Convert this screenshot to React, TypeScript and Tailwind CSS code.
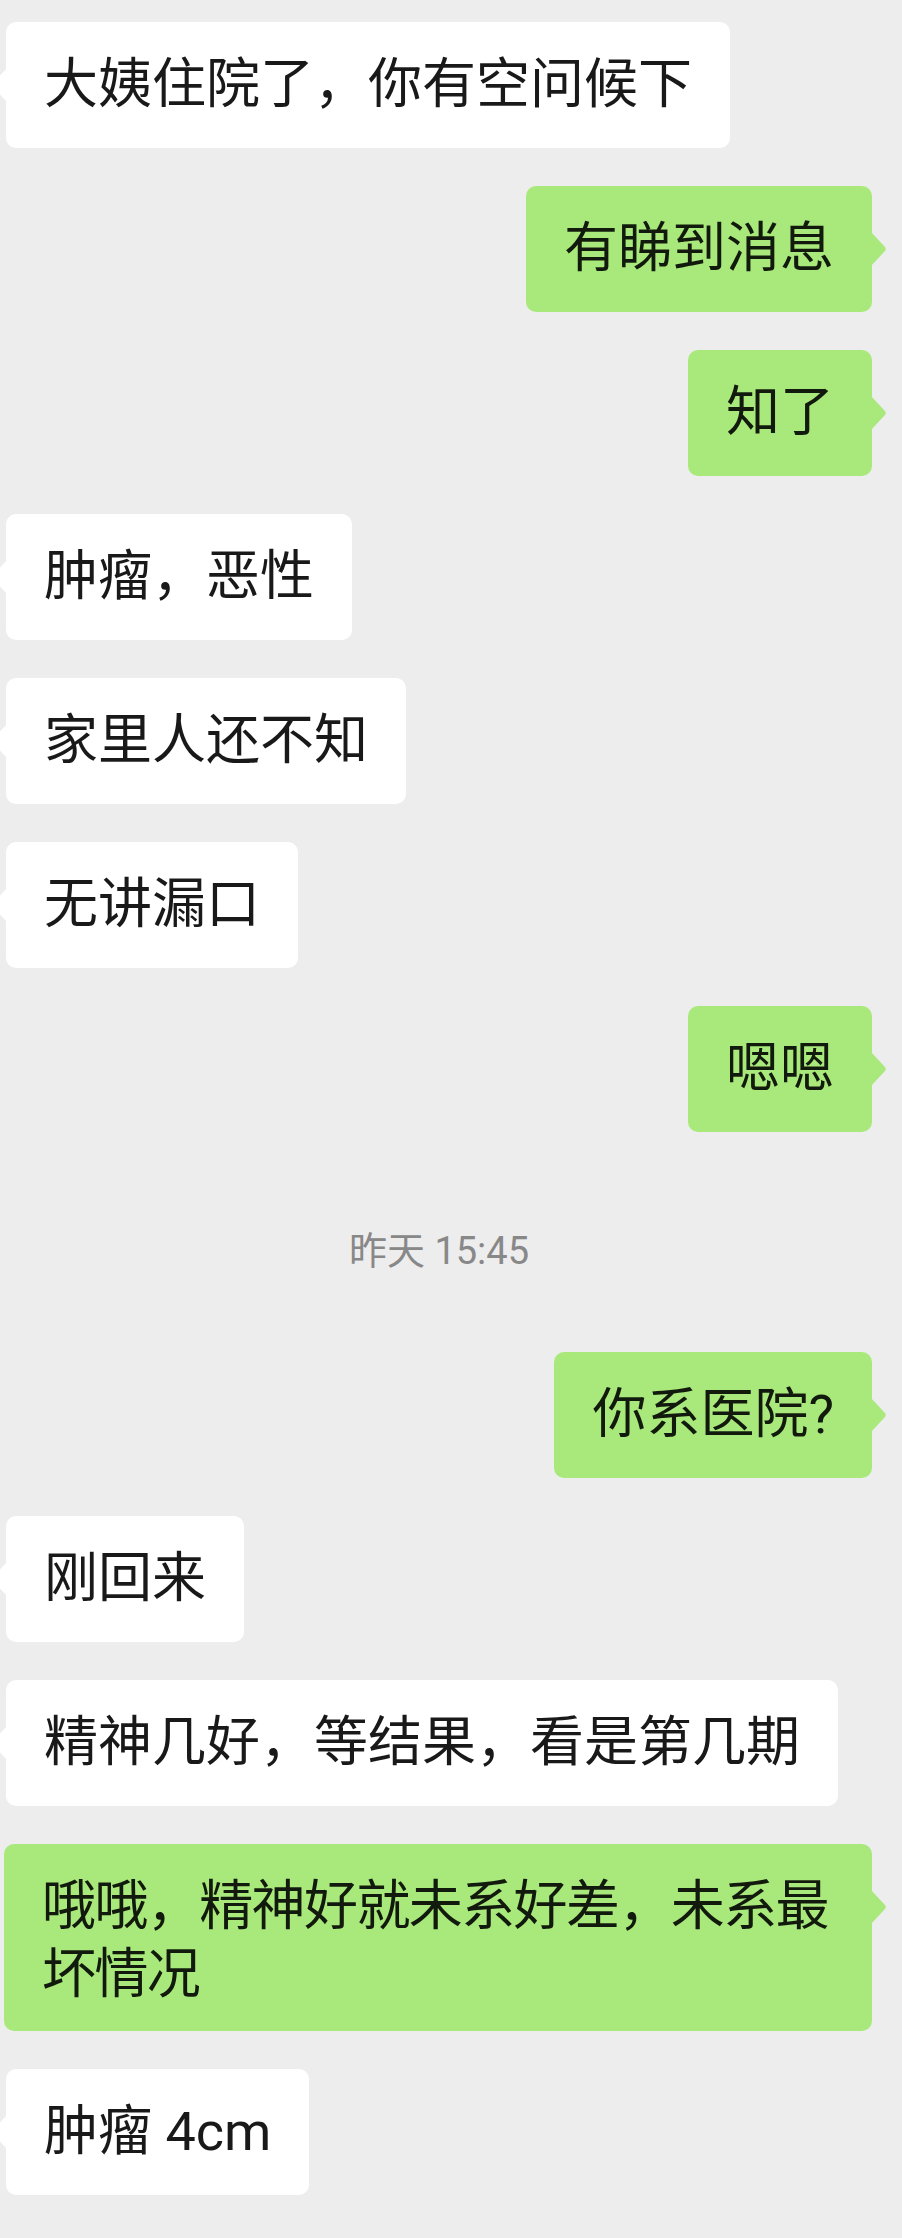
type Msg =
  | { kind: 'in'; text: string }
  | { kind: 'out'; text: string; wide?: boolean }
  | { kind: 'time'; text: string };

const messages: Msg[] = [
  { kind: 'in', text: '大姨住院了，你有空问候下' },
  { kind: 'out', text: '有睇到消息' },
  { kind: 'out', text: '知了' },
  { kind: 'in', text: '肿瘤，恶性' },
  { kind: 'in', text: '家里人还不知' },
  { kind: 'in', text: '无讲漏口' },
  { kind: 'out', text: '嗯嗯' },
  { kind: 'time', text: '昨天 15:45' },
  { kind: 'out', text: '你系医院?' },
  { kind: 'in', text: '刚回来' },
  { kind: 'in', text: '精神几好，等结果，看是第几期' },
  { kind: 'out', text: '哦哦，精神好就未系好差，未系最坏情况', wide: true },
  { kind: 'in', text: '肿瘤 4cm' },
];

const font = { fontFamily: "Roboto, 'Noto Sans CJK SC', sans-serif" };

function Tail({ side }: { side: 'left' | 'right' }) {
  if (side === 'right') {
    return (
      <svg
        className="absolute right-[-15px] top-[46px] fill-[#a9e97b]"
        width="16"
        height="34"
        viewBox="0 0 16 34"
      >
        <path d="M0 0 L13.5 14.5 Q16 17 13.5 19.5 L0 34 Z" />
      </svg>
    );
  }
  return (
    <svg
      className="absolute left-[-15px] top-[46px] fill-white"
      width="16"
      height="34"
      viewBox="0 0 16 34"
    >
      <path d="M16 0 L2.5 14.5 Q0 17 2.5 19.5 L16 34 Z" />
    </svg>
  );
}

function Incoming({ text }: { text: string }) {
  return (
    <div className="relative self-start rounded-[10px] bg-white px-[38px] pt-[29px] pb-[29px] text-[54px] leading-[68px] text-[#191919]">
      <Tail side="left" />
      {text}
    </div>
  );
}

function Outgoing({ text, wide }: { text: string; wide?: boolean }) {
  if (wide) {
    return (
      <div className="relative ml-[-2px] self-stretch rounded-[10px] bg-[#a9e97b] px-[38px] pt-[29px] pb-[22px] text-[54px] leading-[68px] tracking-[-1.6px] text-[#111a0c]">
        <Tail side="right" />
        {text}
      </div>
    );
  }
  return (
    <div className="relative self-end rounded-[10px] bg-[#a9e97b] px-[38px] pt-[29px] pb-[29px] text-[54px] leading-[68px] text-[#111a0c]">
      <Tail side="right" />
      {text}
    </div>
  );
}

function TimeStamp({ text }: { text: string }) {
  return (
    <div className="mt-[61px] mb-[43px] h-[40px] text-center text-[38px] leading-[40px] text-[#888888]">
      {text}
    </div>
  );
}

export default function App() {
  return (
    <div
      className="min-h-[2238px] w-[902px] overflow-hidden bg-[#ededed] pt-[22px] pb-[44px] pl-[6px] pr-[30px]"
      style={font}
    >
      <div className="flex flex-col gap-[38px]">
        {messages.map((m, i) => {
          if (m.kind === 'time') return <TimeStamp key={i} text={m.text} />;
          if (m.kind === 'out') return <Outgoing key={i} text={m.text} wide={m.wide} />;
          return <Incoming key={i} text={m.text} />;
        })}
      </div>
    </div>
  );
}
